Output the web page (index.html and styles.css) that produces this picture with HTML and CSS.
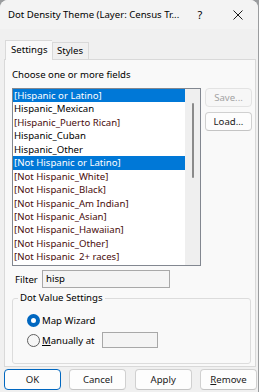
FILE: index.html
```html
<!DOCTYPE html>
<html lang="en">
<head>
    <meta charset="UTF-8">
    <title>Dot Density Theme</title>
    <link rel="stylesheet" href="styles.css">
</head>
<body>
    <div class="window">
        <div class="titlebar">
            <span class="title">Dot Density Theme (Layer: Census Tr...</span>
            <span class="caption-btn">?</span>
            <span class="caption-btn">
                <svg width="10" height="10" viewBox="0 0 10 10"><path d="M0.5 0.5 L9.5 9.5 M9.5 0.5 L0.5 9.5" stroke="#1a1a1a" stroke-width="1" fill="none"/></svg>
            </span>
        </div>

        <div class="tabs">
            <div class="tab active">Settings</div>
            <div class="tab">Styles</div>
        </div>

        <div class="panel">
            <div class="label">Choose one or more fields</div>

            <div class="fields-row">
                <div class="listbox">
                    <ul class="items">
                        <li class="selected">[Hispanic or Latino]</li>
                        <li>Hispanic_Mexican</li>
                        <li class="group-item">[Hispanic_Puerto Rican]</li>
                        <li>Hispanic_Cuban</li>
                        <li>Hispanic_Other</li>
                        <li class="selected">[Not Hispanic or Latino]</li>
                        <li class="group-item">[Not Hispanic_White]</li>
                        <li class="group-item">[Not Hispanic_Black]</li>
                        <li class="group-item">[Not Hispanic_Am Indian]</li>
                        <li class="group-item">[Not Hispanic_Asian]</li>
                        <li class="group-item">[Not Hispanic_Hawaiian]</li>
                        <li class="group-item">[Not Hispanic_Other]</li>
                        <li class="group-item">[Not Hispanic_2+ races]</li>
                    </ul>
                    <div class="scrollbar"><div class="thumb"></div></div>
                </div>
                <div class="side-buttons">
                    <button class="btn" disabled>Save...</button>
                    <button class="btn">Load...</button>
                </div>
            </div>

            <div class="filter-row">
                <span class="filter-label">Filter</span>
                <div class="textbox filter-box">hisp</div>
            </div>

            <fieldset class="group">
                <legend>Dot Value Settings</legend>
                <div class="radio-row">
                    <span class="radio checked"></span>
                    <span>Map Wizard</span>
                </div>
                <div class="radio-row">
                    <span class="radio"></span>
                    <span><u>M</u>anually at</span>
                    <div class="textbox value-box"></div>
                </div>
            </fieldset>
        </div>

        <div class="dialog-buttons">
            <button class="btn default">OK</button>
            <button class="btn">Cancel</button>
            <button class="btn">Apply</button>
            <button class="btn"><u>R</u>emove</button>
        </div>
    </div>
</body>
</html>
```

FILE: styles.css
```css
* {
    box-sizing: border-box;
}

body {
    margin: 0;
    background: #9a9c9e;
    font-family: "Noto Sans", sans-serif;
    font-size: 9.6px;
    color: #000;
}

.window {
    width: 258px;
    height: 392px;
    background: #f0f0f0;
    border-radius: 8px 8px 0 0;
    display: flex;
    flex-direction: column;
    overflow: hidden;
}

.titlebar {
    height: 29px;
    display: flex;
    align-items: center;
    padding-left: 8px;
    background: #f3f3f3;
}

.title {
    width: 173px;
    white-space: nowrap;
}

.caption-btn {
    width: 38px;
    display: flex;
    justify-content: center;
    align-items: center;
    font-size: 11px;
}

.tabs {
    display: flex;
    align-items: flex-start;
    height: 19px;
    margin-top: 11px;
    padding-left: 5px;
    position: relative;
    z-index: 1;
}

.tab {
    width: 37px;
    height: 17px;
    margin-top: 2px;
    padding-left: 4px;
    line-height: 16px;
    border: 1px solid #d9d9d9;
    border-bottom: none;
    background: #f0f0f0;
}

.tab.active {
    width: 47px;
    height: 20px;
    margin-top: 0;
    padding-left: 5px;
    line-height: 17px;
    background: #f9f9f9;
    border-right: none;
}

.panel {
    height: 308px;
    margin-left: 4px;
    width: 252px;
    border: 1px solid #d9d9d9;
    background: #f9f9f9;
    padding: 8px 0 0 7px;
}

.label {
    line-height: 14px;
}

.fields-row {
    display: flex;
    margin-top: 6px;
}

.listbox {
    width: 189px;
    height: 178px;
    border: 1px solid #828790;
    background: #fff;
    display: flex;
    overflow: hidden;
}

.items {
    list-style: none;
    margin: 0;
    padding: 0;
    width: 172px;
    height: 172px;
    overflow: hidden;
}

.items li {
    line-height: 13.45px;
    height: 13.45px;
    padding-left: 1px;
    white-space: nowrap;
}

.items li.group-item {
    color: #4a0d0d;
}

.items li.selected {
    background: #0078d7;
    color: #fff;
}

.scrollbar {
    flex: 1;
    background: #efefef;
    position: relative;
}

.thumb {
    position: absolute;
    left: 7px;
    top: 14px;
    width: 2px;
    height: 75px;
    background: #8a8a8a;
    border-radius: 1px;
}

.side-buttons {
    display: flex;
    flex-direction: column;
    gap: 5px;
    margin-left: 4px;
}

.btn {
    font-family: inherit;
    font-size: 9.6px;
    color: #1a1a1a;
    background: #fdfdfd;
    border: 1px solid #d0d0d0;
    border-bottom-color: #c4c4c4;
    border-radius: 4px;
    padding: 0;
    height: 19px;
    width: 47px;
    line-height: 16px;
}

.btn:disabled {
    color: #a3a3a3;
    background: #f7f7f7;
    border-color: #e3e3e3;
}

.filter-row {
    display: flex;
    align-items: center;
    margin-top: 4px;
}

.filter-label {
    width: 27px;
    padding-left: 3px;
    margin-right: 3px;
}

.textbox {
    border: 1px solid #a8a8a8;
    background: #f4f4f4;
}

.filter-box {
    width: 128px;
    height: 18px;
    line-height: 16px;
    padding-left: 3px;
}

.group {
    width: 239px;
    margin: 3px 0 0 0;
    padding: 5px 0 13px 5px;
    border: 1px solid #dcdcdc;
    border-radius: 3px;
}

.group legend {
    padding: 0 2px;
    line-height: 14px;
}

.radio-row {
    display: flex;
    align-items: center;
    height: 20px;
}

.radio {
    width: 13px;
    height: 13px;
    margin: 0 2px 0 9px;
    border-radius: 50%;
    border: 1px solid #5f5f5f;
    background: #f6f6f6;
}

.radio.checked {
    border: 4px solid #0067c0;
    background: #fff;
}

.value-box {
    width: 56px;
    height: 16px;
    margin-left: 7px;
}

.dialog-buttons {
    display: flex;
    justify-content: space-between;
    margin-top: 2px;
    padding: 0 1px 0 4px;
}

.dialog-buttons .btn {
    width: 57px;
    height: 21px;
}

.btn.default {
    border-color: #0067c0;
}
```
